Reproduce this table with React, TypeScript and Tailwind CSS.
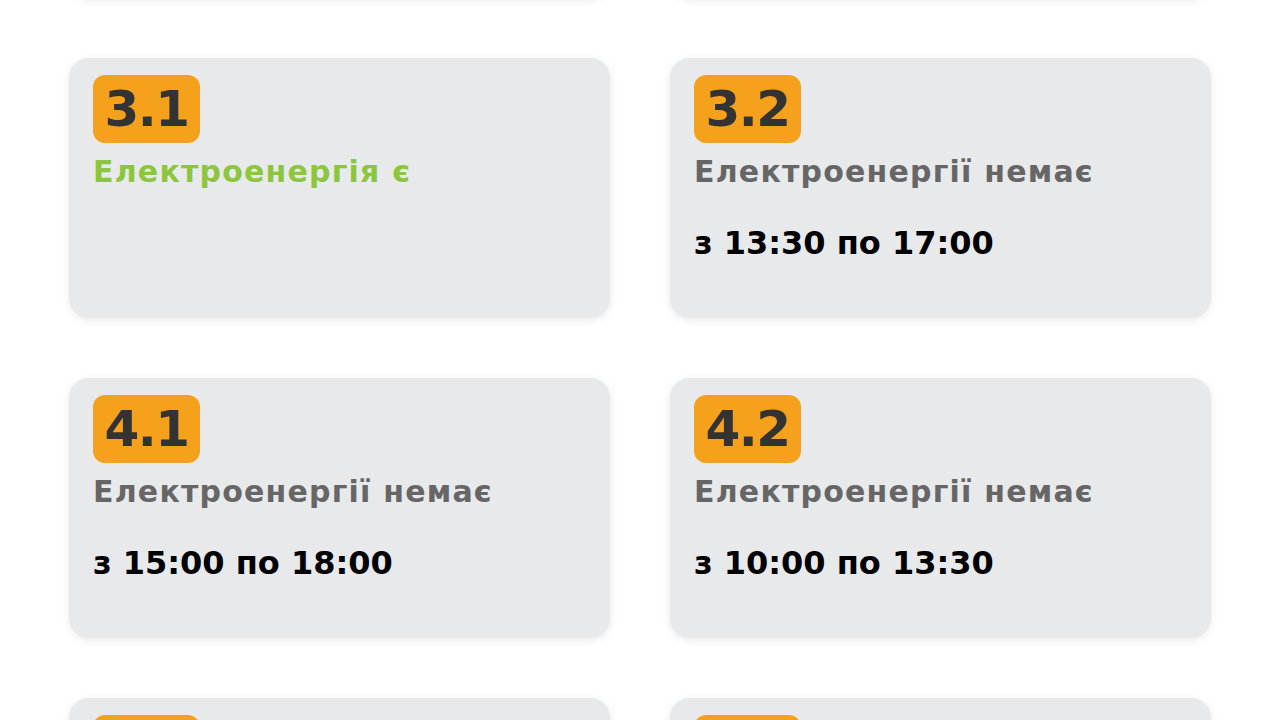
const GROUPS: { id: string; on: boolean; from?: string; to?: string }[] = [
  { id: '2.1', on: false, from: '10:00', to: '13:30' },
  { id: '2.2', on: true },
  { id: '3.1', on: true },
  { id: '3.2', on: false, from: '13:30', to: '17:00' },
  { id: '4.1', on: false, from: '15:00', to: '18:00' },
  { id: '4.2', on: false, from: '10:00', to: '13:30' },
  { id: '5.1', on: true },
  { id: '5.2', on: false, from: '15:00', to: '18:00' },
]

function GroupCard({ id, on, from, to }: { id: string; on: boolean; from?: string; to?: string }) {
  return (
    <div className="h-[260px] rounded-[20px] bg-[#e8e9eb] px-6 pt-[17px] shadow-[0_2px_8px_rgba(0,0,0,0.09)]">
      <div className="inline-flex h-[68px] w-[107px] items-center justify-center rounded-[12px] bg-[#f6a11b] text-[50px] font-bold leading-none tracking-[-0.03em] text-[#333333]">
        {id}
      </div>
      {on ? (
        <p className="mt-[12px] text-[30px] font-bold leading-[34px] tracking-[0.04em] text-[#8cc63f]">Електроенергія є</p>
      ) : (
        <>
          <p className="mt-[12px] text-[30px] font-bold leading-[34px] tracking-[0.04em] text-[#666666]">Електроенергії немає</p>
          <p className="mt-[36px] text-[32px] font-bold leading-[36px] text-black">
            з {from} по {to}
          </p>
        </>
      )}
    </div>
  )
}

export default function App() {
  return (
    <div className="h-[720px] overflow-hidden bg-white" style={{ fontFamily: '"DejaVu Sans", sans-serif' }}>
      <div className="-mt-[262px] grid grid-cols-2 gap-x-[60px] gap-y-[60px] px-[69px]">
        {GROUPS.map((g) => (
          <GroupCard key={g.id} {...g} />
        ))}
      </div>
    </div>
  )
}
